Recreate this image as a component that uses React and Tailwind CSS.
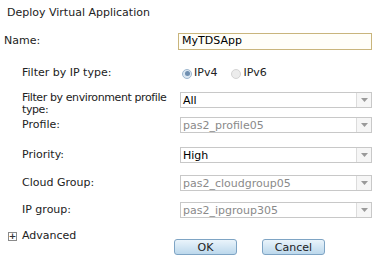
import React from 'react';

const font = { fontFamily: 'Tahoma, "DejaVu Sans", sans-serif' };

function Caret() {
  return (
    <svg width="7" height="4" viewBox="0 0 7 4">
      <path d="M0 0h7L3.5 4z" fill="#9a9a9a" />
    </svg>
  );
}

function Select({ value, disabled }) {
  return (
    <div className="flex h-[16px] w-[192px] border border-[#c8c8c8] bg-white">
      <div
        className={`flex-1 flex items-center pl-[2px] leading-none ${
          disabled ? 'text-[#8a8a8a]' : 'text-black'
        }`}
      >
        {value}
      </div>
      <div className="w-[15px] flex items-center justify-center border-l border-[#dcdcdc] bg-[#f6f6f6]">
        <Caret />
      </div>
    </div>
  );
}

function Radio({ checked, label }) {
  return (
    <div className="flex items-center gap-[2px]">
      <span
        className={`w-[10px] h-[10px] rounded-full flex items-center justify-center border ${
          checked ? 'border-[#9fb8cf] bg-[#dbe7f2]' : 'border-[#d4d4d4] bg-[#ececec]'
        }`}
      >
        {checked && <span className="w-[5px] h-[5px] rounded-full bg-[#6f8fb0]" />}
      </span>
      <span>{label}</span>
    </div>
  );
}

function Row({ label, children, className = '', labelClass = '' }) {
  return (
    <div className={`flex ${className}`}>
      <div className={`w-[180px] pl-[22px] shrink-0 ${labelClass}`}>{label}</div>
      <div>{children}</div>
    </div>
  );
}

function Button({ children }) {
  return (
    <button className="w-[63px] h-[16px] rounded-[3px] border border-[#7ea4c4] bg-gradient-to-b from-[#eaf4fb] to-[#bcd8ec] text-[11px] leading-none text-[#222]">
      {children}
    </button>
  );
}

export default function App() {
  return (
    <div className="w-[379px] h-[260px] bg-white text-[11px] text-[#222] overflow-hidden" style={font}>
      <div className="h-[26px] flex items-center pl-[7px]">Deploy Virtual Application</div>

      <div className="flex items-center h-[17px] mt-[7px]">
        <div className="w-[178px] pl-[4px] shrink-0">Name:</div>
        <div className="w-[194px] h-[17px] border border-[#c9b57c] bg-[#fffef8] flex items-center pl-[3px] text-black">
          MyTDSApp
        </div>
      </div>

      <Row label="Filter by IP type:" className="items-center h-[17px] mt-[15px]">
        <div className="flex items-center gap-[14px] pl-[2px]">
          <Radio checked label="IPv4" />
          <Radio label="IPv6" />
        </div>
      </Row>

      <Row
        label={
          <>
            Filter by environment profile
            <br />
            type:
          </>
        }
        className="items-start mt-[10px] h-[24px]"
        labelClass="leading-[12px] whitespace-nowrap tracking-[-0.4px]"
      >
        <Select value="All" />
      </Row>

      <Row label="Profile:" className="items-center h-[16px] mt-[1px]">
        <Select value="pas2_profile05" disabled />
      </Row>

      <Row label="Priority:" className="items-center h-[16px] mt-[14px]">
        <Select value="High" />
      </Row>

      <Row label="Cloud Group:" className="items-center h-[16px] mt-[12px]">
        <Select value="pas2_cloudgroup05" disabled />
      </Row>

      <Row label="IP group:" className="items-center h-[16px] mt-[11px]">
        <Select value="pas2_ipgroup305" disabled />
      </Row>

      <div className="flex items-start mt-[11px]">
        <div className="w-[174px] shrink-0 h-[14px] flex items-center pl-[8px] gap-[5px]">
          <span className="w-[9px] h-[9px] border border-[#8a8a8a] flex items-center justify-center text-[9px] leading-none text-[#333] font-bold">
            +
          </span>
          <span>Advanced</span>
        </div>
        <div className="flex gap-[25px] mt-[10px]">
          <Button>OK</Button>
          <Button>Cancel</Button>
        </div>
      </div>
    </div>
  );
}
